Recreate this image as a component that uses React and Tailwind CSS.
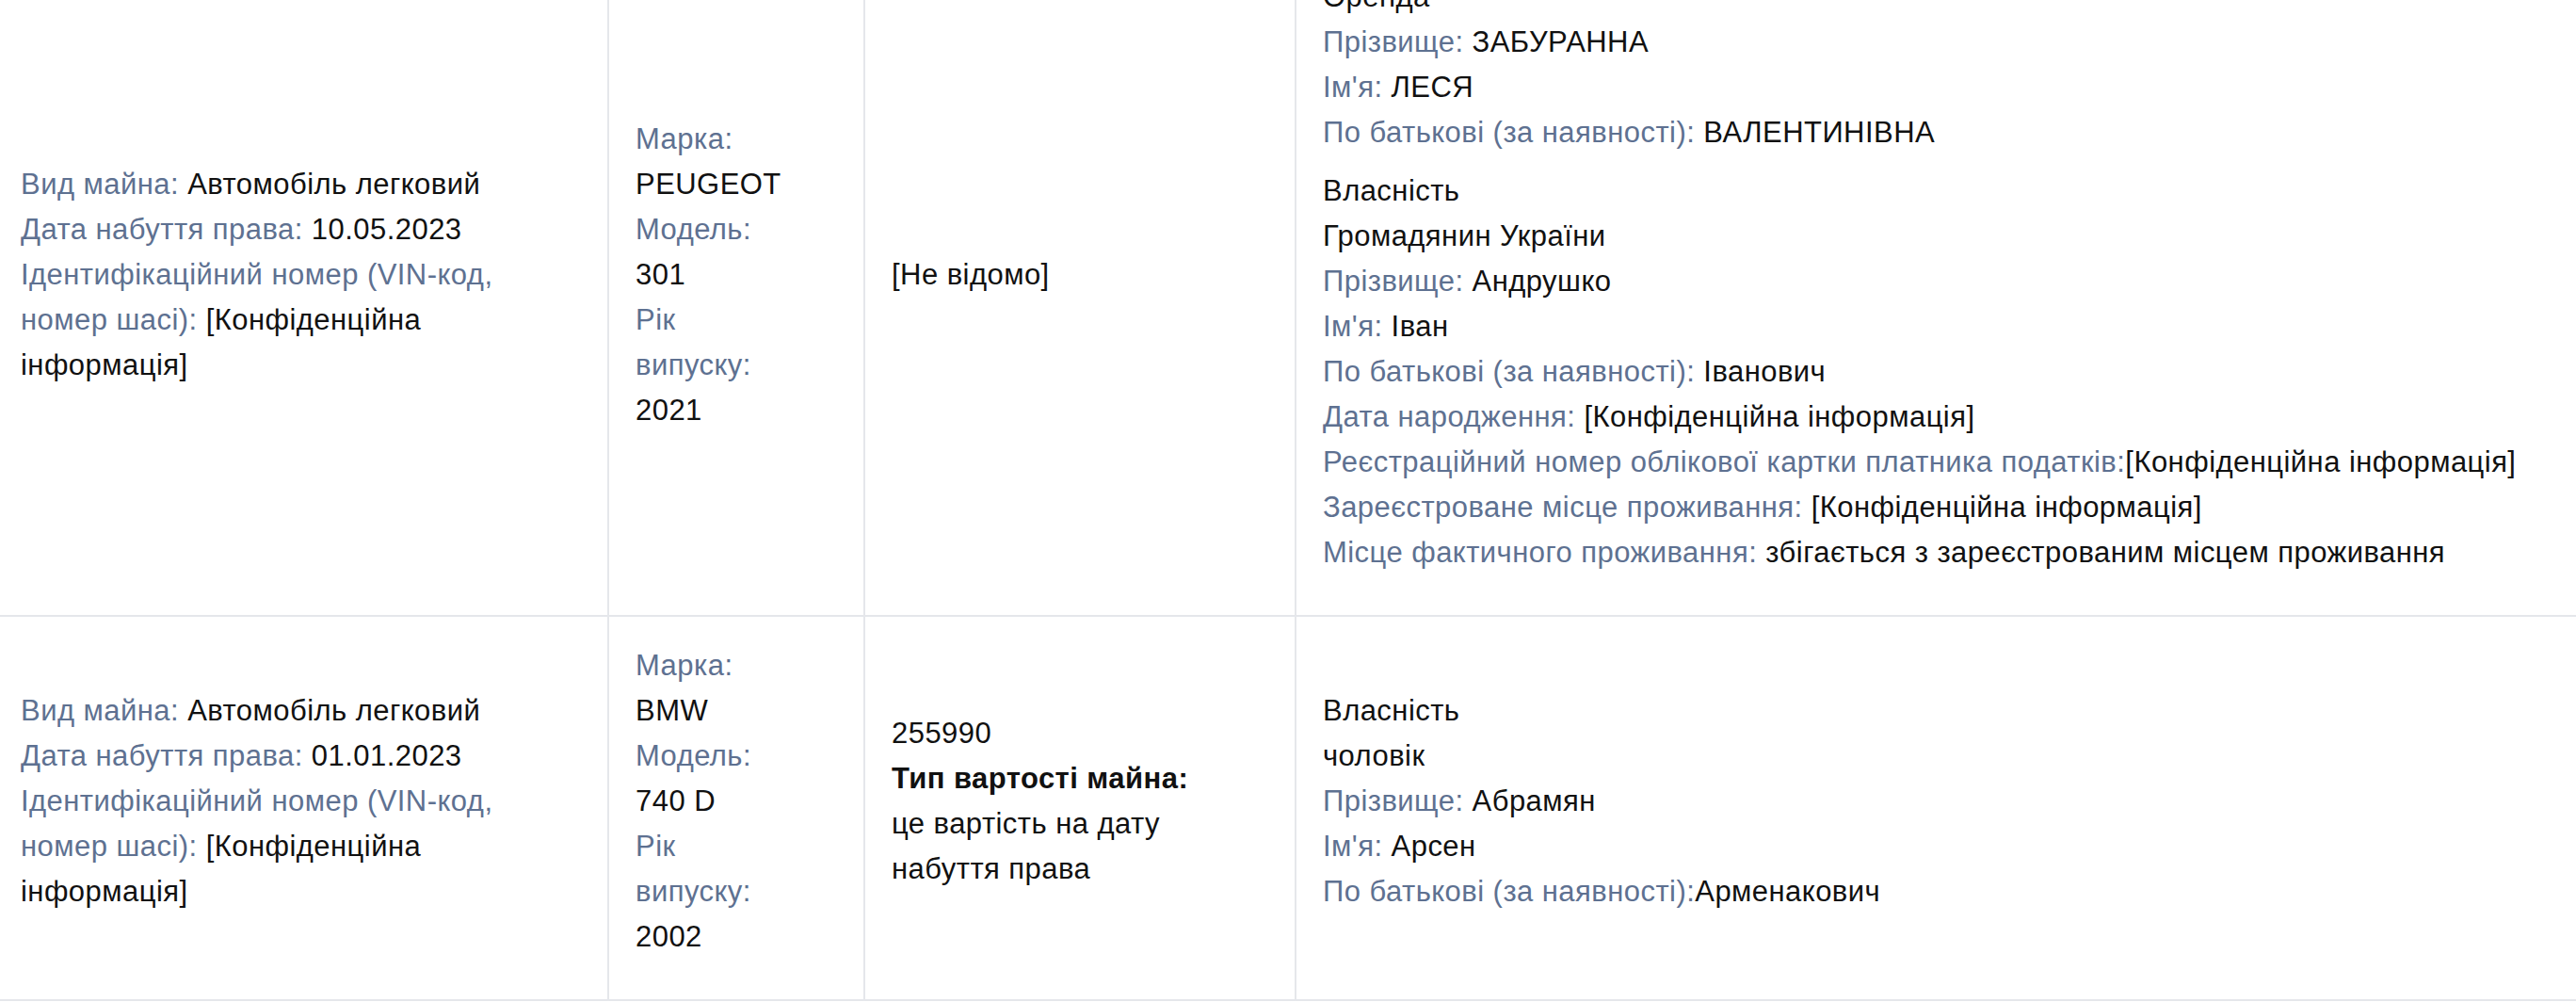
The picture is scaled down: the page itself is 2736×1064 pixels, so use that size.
const LABEL = 'text-[#5e7191]';

function Field({ label, value, tight }) {
  return (
    <div>
      <span className={LABEL}>{label}</span>
      {tight ? '' : ' '}
      {value}
    </div>
  );
}

function Cell({ className = '', children }) {
  return <div className={`flex items-center py-[28px] ${className}`}>{children}</div>;
}

function PropertyRow({ kind, date, make, model, year, value, owners }) {
  return (
    <div className="flex border-b-2 border-[#e5e7eb]">
      <Cell className="w-[647px] shrink-0 border-r-2 border-[#e5e7eb] pl-[22px] pr-[28px]">
        <div className="mb-[14px] max-w-[540px]">
          <Field label="Вид майна:" value={kind} />
          <Field label="Дата набуття права:" value={date} />
          <Field label="Ідентифікаційний номер (VIN-код, номер шасі):" value="[Конфіденційна інформація]" />
        </div>
      </Cell>
      <Cell className="w-[272px] shrink-0 border-r-2 border-[#e5e7eb] px-[28px]">
        <div className="mb-[14px] max-w-[170px]">
          <div className={LABEL}>Марка:</div>
          <div>{make}</div>
          <div className={LABEL}>Модель:</div>
          <div>{model}</div>
          <div className={LABEL}>Рік випуску:</div>
          <div>{year}</div>
        </div>
      </Cell>
      <Cell className="w-[458px] shrink-0 border-r-2 border-[#e5e7eb] px-[28px]">
        <div className="mb-[14px] max-w-[360px]">{value}</div>
      </Cell>
      <Cell className="flex-1 px-[28px]">
        <div>{owners}</div>
      </Cell>
    </div>
  );
}

export default function App() {
  return (
    <div
      className="h-[1064px] overflow-hidden bg-white text-[31px] leading-[48px] tracking-[0.45px] text-[#111]"
      style={{ fontFamily: '"Liberation Sans", Arial, sans-serif' }}
    >
      <div className="-mt-[55px] w-[2736px]">
        <PropertyRow
          kind="Автомобіль легковий"
          date="10.05.2023"
          make="PEUGEOT"
          model="301"
          year="2021"
          value={<div>[Не відомо]</div>}
          owners={
            <>
              <div className="mb-[14px]">
                <div>Оренда</div>
                <Field label="Прізвище:" value="ЗАБУРАННА" />
                <Field label="Ім'я:" value="ЛЕСЯ" />
                <Field label="По батькові (за наявності):" value="ВАЛЕНТИНІВНА" />
              </div>
              <div className="mb-[14px]">
                <div>Власність</div>
                <div>Громадянин України</div>
                <Field label="Прізвище:" value="Андрушко" />
                <Field label="Ім'я:" value="Іван" />
                <Field label="По батькові (за наявності):" value="Іванович" />
                <Field label="Дата народження:" value="[Конфіденційна інформація]" />
                <Field
                  label="Реєстраційний номер облікової картки платника податків:"
                  value="[Конфіденційна інформація]"
                  tight
                />
                <Field label="Зареєстроване місце проживання:" value="[Конфіденційна інформація]" />
                <Field
                  label="Місце фактичного проживання:"
                  value="збігається з зареєстрованим місцем проживання"
                />
              </div>
            </>
          }
        />
        <PropertyRow
          kind="Автомобіль легковий"
          date="01.01.2023"
          make="BMW"
          model="740 D"
          year="2002"
          value={
            <>
              <div>255990</div>
              <div className="font-bold">Тип вартості майна:</div>
              <div>це вартість на дату набуття права</div>
            </>
          }
          owners={
            <div className="mb-[14px]">
              <div>Власність</div>
              <div>чоловік</div>
              <Field label="Прізвище:" value="Абрамян" />
              <Field label="Ім'я:" value="Арсен" />
              <Field label="По батькові (за наявності):" value="Арменакович" tight />
            </div>
          }
        />
      </div>
    </div>
  );
}
